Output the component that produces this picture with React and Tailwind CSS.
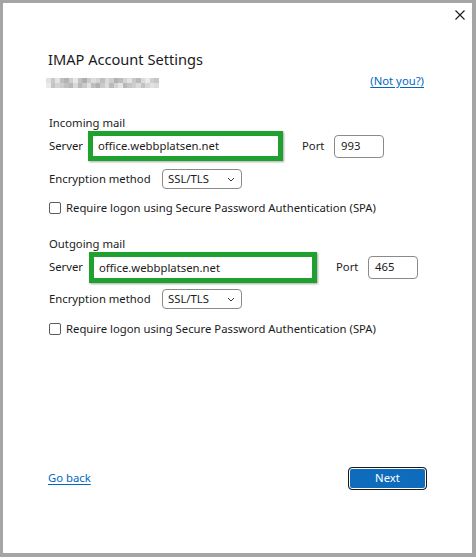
import { useState } from "react";

// pixel mosaic standing in for the blurred-out e-mail address
const blurRows = [
  "e2c9e4bfb3cfe6c2aecbdcd3bfdacdb2bdd3e2c8badaeacfc6",
  "ebc4d3cdc0b7d8b8c9e0bdb1cadcbad2e4b8c5cddbc2d6e2dc",
];

const font = { fontFamily: '"Segoe UI", "Noto Sans", sans-serif' };
const txt = "text-[11.3px] text-[#1b1b1b] whitespace-nowrap";

const ServerField = ({ value, width }) => (
  <div
    className={`h-full border-[5px] border-[#1fa02f] bg-white flex items-center pl-[5px] shadow-[1px_1px_2px_rgba(0,0,0,0.35)] ${width}`}
  >
    <span className={`${txt} leading-none`}>{value}</span>
  </div>
);

const PortField = ({ value }) => (
  <div className={`w-[50px] h-[23px] border border-[#8a8a8a] rounded-[4px] bg-white flex items-center pl-[6px] ${txt}`}>
    {value}
  </div>
);

const EncryptionSelect = () => (
  <div className={`w-[80px] h-[20px] border border-[#8a8a8a] rounded-[4px] bg-white flex items-center justify-between pl-[5px] pr-[6px] ${txt}`}>
    <span>SSL/TLS</span>
    <svg width="8" height="5" viewBox="0 0 8 5" fill="none">
      <path d="M1 1l3 3 3-3" stroke="#333" strokeWidth="1" />
    </svg>
  </div>
);

const SpaCheckbox = () => {
  const [checked, setChecked] = useState(false);
  return (
    <label className="flex items-center h-[16px] cursor-pointer" onClick={() => setChecked(!checked)}>
      <span className="w-[12px] h-[12px] border border-[#5c5c5c] rounded-[2px] bg-white" />
      <span className={`ml-[5px] ${txt}`}>
        Require logon using Secure Password Authentication (SPA)
      </span>
    </label>
  );
};

const MailSection = ({ title, server, port, serverWidth, labelWidth, rowHeight }) => (
  <div className="flex flex-col">
    <div className={`h-[17px] leading-[17px] ${txt}`}>{title}</div>
    <div className={`flex items-center ${rowHeight}`}>
      <span className={`${txt} ${labelWidth}`}>Server</span>
      <ServerField value={server} width={serverWidth} />
      <span className={`ml-[19px] w-[32px] ${txt}`}>Port</span>
      <PortField value={port} />
    </div>
  </div>
);

export default function App() {
  return (
    <div
      className="w-[476px] h-[557px] bg-[#a5a5a5] pt-[3px] pl-[3px] pr-[4px] pb-[4px]"
      style={font}
    >
      <div className="w-full h-full bg-white flex flex-col">
        <div className="flex justify-end pt-[7px] pr-[7px]">
          <button className="w-[10px] h-[10px]">
            <svg width="10" height="10" viewBox="0 0 10 10">
              <path d="M0.5 0.5l9 9M9.5 0.5l-9 9" stroke="#1a1a1a" strokeWidth="1.1" />
            </svg>
          </button>
        </div>

        <div className="pl-[45px] pr-[48px] mt-[29px]">
          <h1 className="text-[14.6px] leading-[20px] text-[#1b1b1b] font-normal whitespace-nowrap">
            IMAP Account Settings
          </h1>
          <div className="flex items-center justify-between h-[16px] mt-[4px]">
            <div className="-ml-[2px] mt-[3px] flex flex-col">
              {blurRows.map((row, r) => (
                <div key={r} className="flex">
                  {row.match(/.{2}/g).map((v, i) => (
                    <span
                      key={i}
                      className="w-[4.5px] h-[5px]"
                      style={{ backgroundColor: `#${v}${v}${v}` }}
                    />
                  ))}
                </div>
              ))}
            </div>
            <a href="#" className="text-[11.3px] text-[#0067c0] underline underline-offset-2">
              (Not you?)
            </a>
          </div>
        </div>

        <div className="pl-[46px] mt-[25px] flex flex-col">
          <MailSection
            title="Incoming mail"
            server="office.webbplatsen.net"
            port="993"
            serverWidth="w-[195px]"
            labelWidth="w-[39px]"
            rowHeight="h-[30px]"
          />
          <div className="flex items-center mt-[8px]">
            <span className={`w-[113px] ${txt}`}>Encryption method</span>
            <EncryptionSelect />
          </div>
          <div className="mt-[11px]">
            <SpaCheckbox />
          </div>

          <div className="mt-[19px]">
            <MailSection
              title="Outgoing mail"
              server="office.webbplatsen.net"
              port="465"
              serverWidth="w-[228px]"
              labelWidth="w-[40px]"
              rowHeight="h-[31px]"
            />
          </div>
          <div className="flex items-center mt-[6px]">
            <span className={`w-[113px] ${txt}`}>Encryption method</span>
            <EncryptionSelect />
          </div>
          <div className="mt-[12px]">
            <SpaCheckbox />
          </div>
        </div>

        <div className="flex items-center justify-between pl-[45px] pr-[45px] mt-[130px]">
          <a href="#" className="text-[11.3px] text-[#0067c0] underline underline-offset-2">
            Go back
          </a>
          <button className="w-[79px] h-[23px] rounded-[4px] bg-[#0f6cbd] border border-[#1a1a1a] shadow-[inset_0_0_0_1px_#ffffff] text-[11.3px] text-white">
            Next
          </button>
        </div>
      </div>
    </div>
  );
}
